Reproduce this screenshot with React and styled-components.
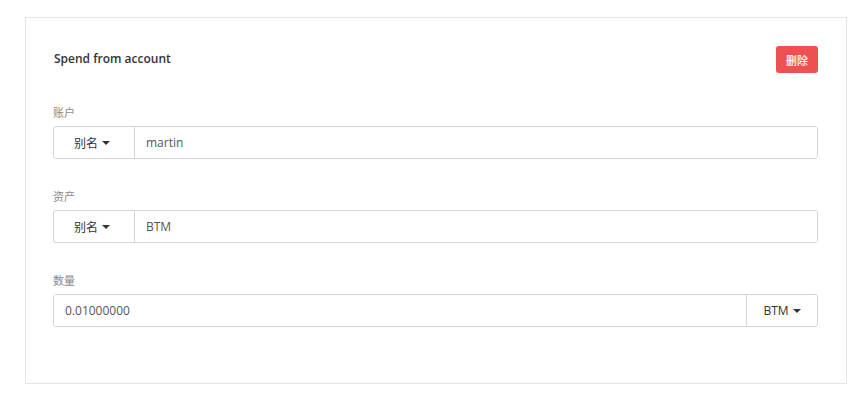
import React from 'react';
import styled, { createGlobalStyle } from 'styled-components';

const GlobalStyle = createGlobalStyle`
  html, body {
    margin: 0;
    padding: 0;
    background: #ffffff;
  }
  body {
    font-family: "Open Sans", "Noto Sans CJK SC", sans-serif;
    color: #333;
  }
`;

const fields = [
  { id: 'account', label: '账户', addon: '别名', value: 'martin' },
  { id: 'asset', label: '资产', addon: '别名', value: 'BTM' }
];

export default function App() {
  return (
    <>
      <GlobalStyle />
      <Page>
        <Card>
          <Header>
            <Title>Spend from account</Title>
            <DeleteButton type="button">删除</DeleteButton>
          </Header>

          {fields.map((f) => (
            <FieldGroup key={f.id}>
              <Label>{f.label}</Label>
              <InputGroup>
                <Addon side="left">
                  {f.addon}
                  <Caret />
                </Addon>
                <Input readOnly value={f.value} />
              </InputGroup>
            </FieldGroup>
          ))}

          <FieldGroup>
            <Label>数量</Label>
            <InputGroup>
              <Input readOnly value="0.01000000" />
              <Addon side="right">
                BTM
                <Caret />
              </Addon>
            </InputGroup>
          </FieldGroup>
        </Card>
      </Page>
    </>
  );
}

const Page = styled.div`
  padding: 17px 18px 18px 25px;
`;

const Card = styled.section`
  box-sizing: border-box;
  width: 822px;
  height: 367px;
  border: 1px solid #e4e4e4;
  background: #ffffff;
  padding: 28px 28px 0 27px;
  display: flex;
  flex-direction: column;
  gap: 29px;
`;

const Header = styled.div`
  display: flex;
  align-items: center;
  justify-content: space-between;
  height: 27px;
  margin-bottom: 2px;
`;

const Title = styled.h2`
  margin: 0 0 3px 1px;
  font-size: 12px;
  font-weight: 600;
  color: #333;
`;

const DeleteButton = styled.button`
  width: 42px;
  height: 27px;
  border: none;
  border-radius: 3px;
  background: #ef5152;
  color: #fff;
  font-family: "Noto Sans CJK SC", sans-serif;
  font-size: 11px;
  font-weight: 500;
  padding: 0;
`;

const FieldGroup = styled.div`
  display: flex;
  flex-direction: column;
`;

const Label = styled.label`
  font-family: "Noto Sans CJK SC", sans-serif;
  font-size: 11px;
  line-height: 16px;
  color: #8a8a8a;
  margin-bottom: 6px;
`;

const InputGroup = styled.div`
  display: flex;
  height: 33px;
  box-sizing: border-box;
  border: 1px solid #d6d6d6;
  border-radius: 3px;
  overflow: hidden;
`;

const Addon = styled.div`
  flex: none;
  width: ${(p) => (p.side === 'left' ? '81px' : '71px')};
  display: flex;
  align-items: center;
  justify-content: center;
  gap: 4px;
  font-size: 12px;
  color: #333;
  ${(p) => (p.side === 'left' ? 'border-right' : 'border-left')}: 1px solid #d6d6d6;
  padding-right: ${(p) => (p.side === 'left' ? '4px' : '0')};
  box-sizing: border-box;
  font-family: "Open Sans", "Noto Sans CJK SC", sans-serif;
`;

const Caret = styled.span`
  display: inline-block;
  width: 0;
  height: 0;
  border-left: 4px solid transparent;
  border-right: 4px solid transparent;
  border-top: 4px solid #333;
`;

const Input = styled.input`
  flex: 1;
  min-width: 0;
  border: none;
  outline: none;
  padding: 0 11px;
  font-family: "Open Sans", sans-serif;
  font-size: 12px;
  color: #555;
  background: #fff;
`;
